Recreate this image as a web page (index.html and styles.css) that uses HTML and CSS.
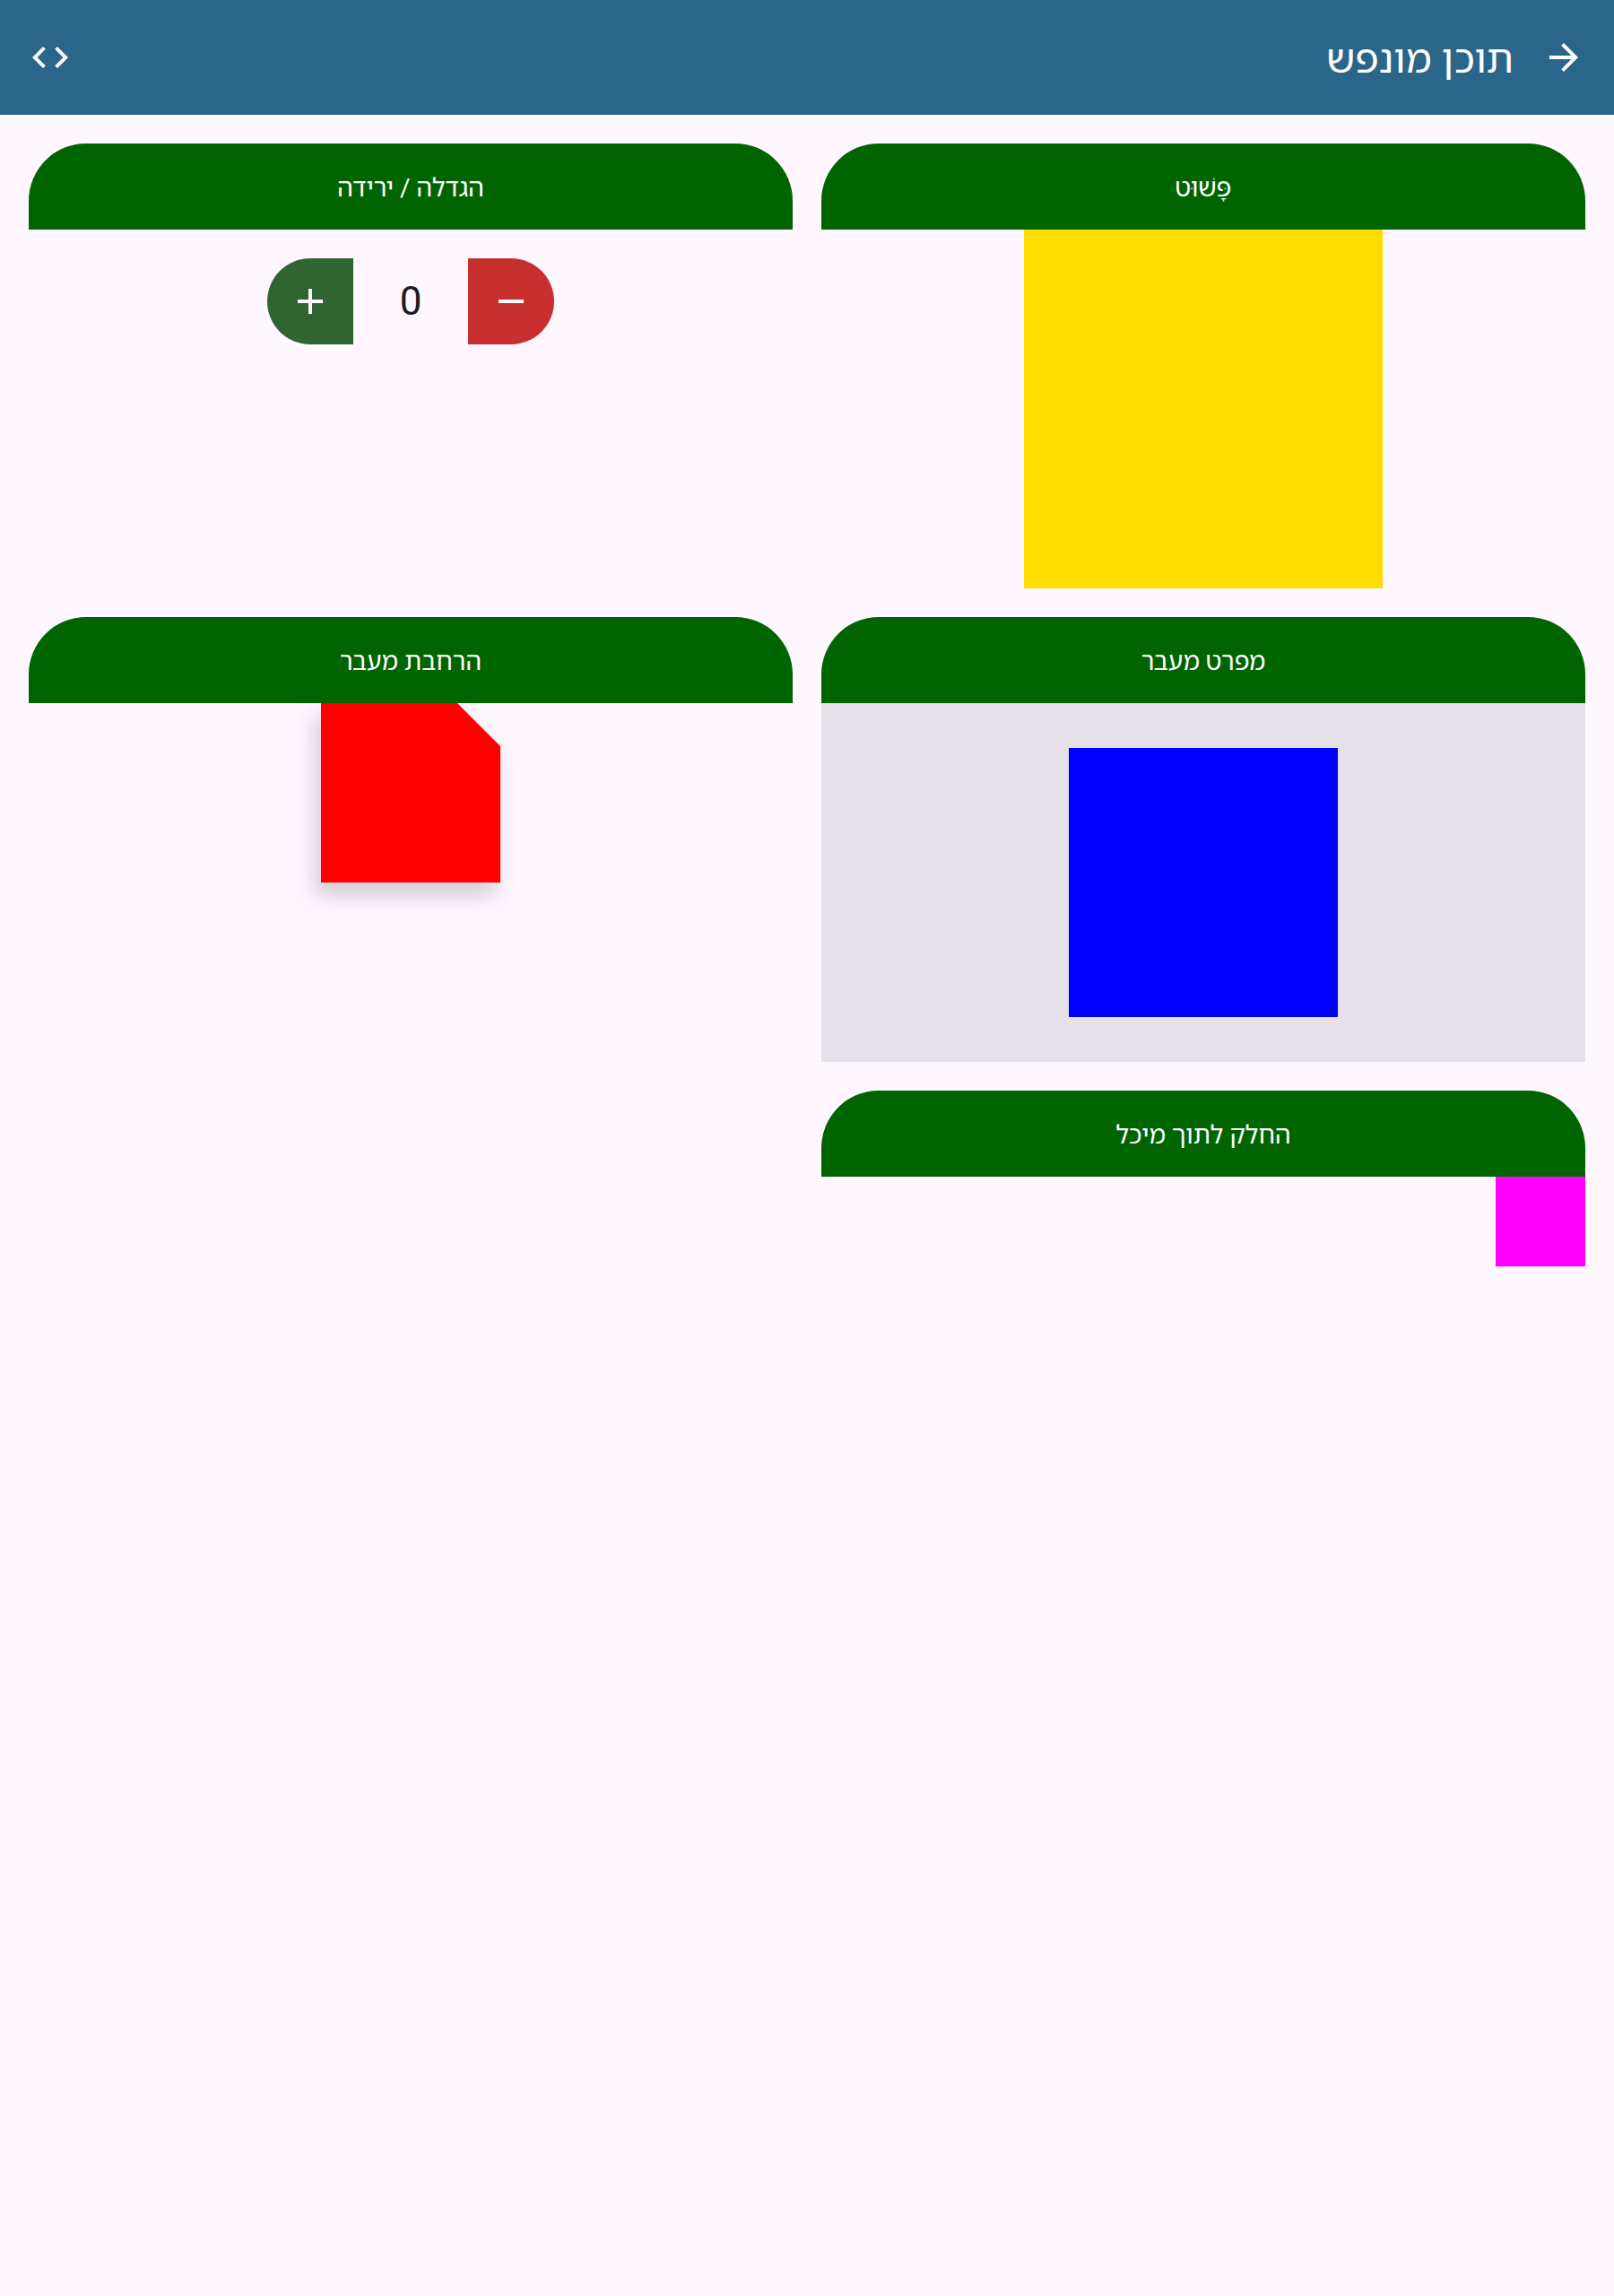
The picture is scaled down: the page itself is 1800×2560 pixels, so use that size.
FILE: index.html
```html
<!DOCTYPE html>
<html lang="he" dir="rtl">
<head>
<meta charset="utf-8">
<meta name="viewport" content="width=device-width, initial-scale=1">
<title>תוכן מונפש</title>
<link rel="stylesheet" href="styles.css">
</head>
<body>
<header class="app-bar">
  <button class="icon-button" type="button" aria-label="חזרה">
    <svg class="icon" viewBox="0 0 24 24"><path d="M12 4l-1.410 1.410L16.170 11H4v2h12.170l-5.580 5.590L12 20l8-8z"/></svg>
  </button>
  <h1 class="app-title">תוכן מונפש</h1>
  <button class="icon-button" type="button" aria-label="קוד מקור">
    <svg class="icon" viewBox="0 0 24 24"><path d="M9.400 16.600L4.800 12l4.600-4.600L8 6l-6 6 6 6 1.400-1.400zm5.200 0l4.600-4.600-4.600-4.600L16 6l6 6-6 6-1.400-1.400z"/></svg>
  </button>
</header>
<main class="cards">
  <section class="card">
    <h2 class="card-title">פָּשׁוּט</h2>
    <div class="stage"><div class="square yellow"></div></div>
  </section>
  <section class="card">
    <h2 class="card-title">הגדלה / ירידה</h2>
    <div class="stage">
      <div class="counter">
        <button class="step minus" type="button" aria-label="הפחתה"><svg class="icon" viewBox="0 0 24 24"><path d="M5 11h14v2H5z"/></svg></button>
        <output class="count">0</output>
        <button class="step plus" type="button" aria-label="הוספה"><svg class="icon" viewBox="0 0 24 24"><path d="M11 5h2v6h6v2h-6v6h-2v-6H5v-2h6z"/></svg></button>
      </div>
    </div>
  </section>
  <section class="card">
    <h2 class="card-title">מפרט מעבר</h2>
    <div class="stage tinted"><div class="square blue"></div></div>
  </section>
  <section class="card">
    <h2 class="card-title">הרחבת מעבר</h2>
    <div class="stage"><div class="raised"><div class="square red"></div></div></div>
  </section>
  <section class="card">
    <h2 class="card-title">החלק לתוך מיכל</h2>
    <div class="stage at-start"><div class="square magenta"></div></div>
  </section>
</main>
</body>
</html>
```
FILE: styles.css
```css
* { box-sizing: border-box; }

body {
  margin: 0;
  min-height: 100vh;
  background: #fef7ff;
  color: #1d1b20;
  font-family: Roboto, "Noto Sans Hebrew", "Open Sans", "Noto Sans", sans-serif;
}

button {
  padding: 0;
  border: 0;
  background: none;
  color: #fff;
  cursor: pointer;
}

.icon {
  display: block;
  width: 48px;
  height: 48px;
  fill: currentColor;
}

.app-bar {
  display: flex;
  align-items: center;
  gap: 32px;
  height: 128px;
  padding: 0 32px;
  background: #296689;
  color: #fff;
}

.app-title {
  flex: 1;
  margin: 0;
  padding-top: 4px;
  font-size: 44px;
  font-weight: 400;
  line-height: 56px;
}

.cards {
  display: grid;
  grid-template-columns: 1fr 1fr;
  gap: 32px;
  padding: 32px;
}

.card-title {
  display: flex;
  align-items: center;
  justify-content: center;
  height: 96px;
  margin: 0;
  padding-top: 4px;
  border-radius: 64px 64px 0 0;
  background: #006400;
  color: #fff;
  font-size: 28px;
  font-weight: 400;
  line-height: 40px;
}

.stage {
  display: flex;
  align-items: flex-start;
  justify-content: center;
  height: 400px;
  overflow: hidden;
}

.tinted {
  align-items: center;
  background: #e6e0e9;
}

.at-start { justify-content: flex-start; }

.square { aspect-ratio: 1; }
.yellow { width: 400px; background: #fd0; }
.blue { width: 300px; background: #00f; }
.magenta { width: 100px; background: #f0f; }

.red {
  width: 200px;
  background: #f00;
  clip-path: polygon(0 0, 152px 0, 100% 48px, 100% 100%, 0 100%);
}

.raised { filter: drop-shadow(-6px 14px 12px rgb(0 0 0 / 18%)); }

.counter {
  display: flex;
  align-items: center;
  padding: 32px;
}

.step {
  display: grid;
  place-items: center;
  width: 96px;
  height: 96px;
}

.minus {
  border-radius: 0 48px 48px 0;
  background: #c82f2f;
}

.plus {
  border-radius: 48px 0 0 48px;
  background: #306430;
}

.count {
  width: 128px;
  font-size: 44px;
  line-height: 56px;
  text-align: center;
}
```
